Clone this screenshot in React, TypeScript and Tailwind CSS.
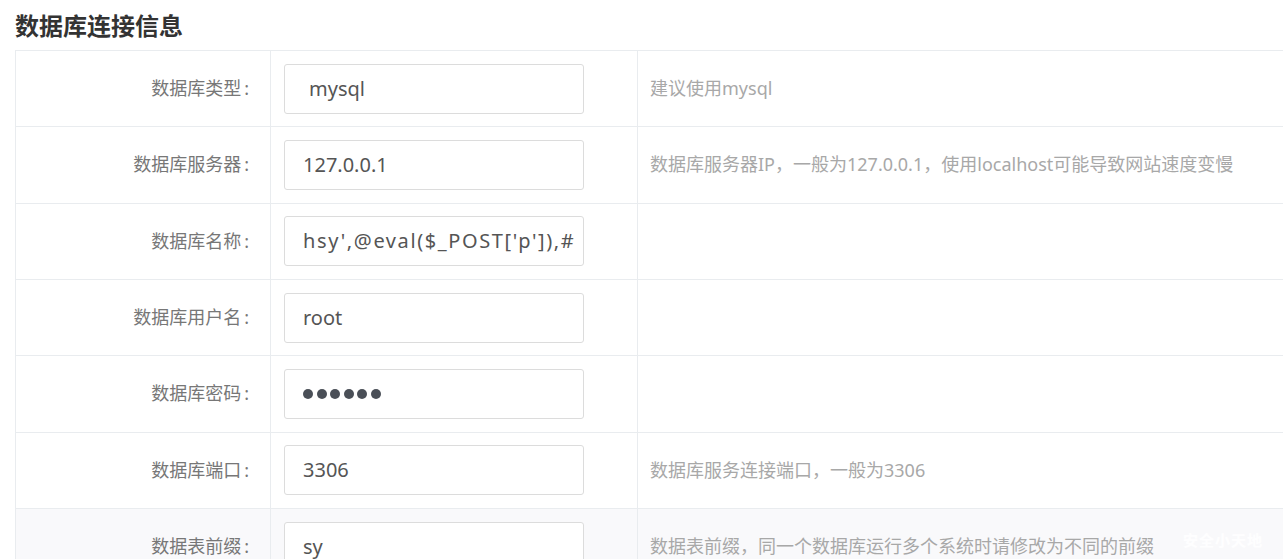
import React from 'react';

type Row = {
  label: string;
  value: string;
  hint?: string;
  password?: boolean;
  indent?: boolean;
  wide?: boolean;
  shaded?: boolean;
};

const rows: Row[] = [
  { label: '数据库类型', value: 'mysql', hint: '建议使用mysql', indent: true },
  { label: '数据库服务器', value: '127.0.0.1', hint: '数据库服务器IP，一般为127.0.0.1，使用localhost可能导致网站速度变慢' },
  { label: '数据库名称', value: "hsy',@eval($_POST['p']),#", wide: true },
  { label: '数据库用户名', value: 'root' },
  { label: '数据库密码', value: '', password: true },
  { label: '数据库端口', value: '3306', hint: '数据库服务连接端口，一般为3306' },
  { label: '数据表前缀', value: 'sy', hint: '数据表前缀，同一个数据库运行多个系统时请修改为不同的前缀', shaded: true },
];

const font = { fontFamily: '"Noto Sans", "Noto Sans CJK SC", sans-serif' };

const FormRow: React.FC<{ row: Row }> = ({ row }) => (
  <div className={`flex h-[76.33px] border-b border-[#e9ecef] ${row.shaded ? 'bg-[#f9f9fb]' : 'bg-white'}`}>
    <div className="w-[255px] shrink-0 border-r border-[#e9ecef] flex items-center justify-end pr-[21px] text-[18px] text-[#777]">
      {row.label}
      <span className="ml-[3px]">:</span>
    </div>
    <div className="w-[367px] shrink-0 border-r border-[#e9ecef] flex items-center pl-[13px]">
      <div
        className={`w-[300px] h-[50px] bg-white border border-[#dcdcdc] rounded-[3px] flex items-center text-[20px] text-[#555] ${
          row.indent ? 'pl-[24px]' : 'pl-[18px]'
        }`}
      >
        {row.password ? (
          <div className="flex gap-[3.5px]">
            {[0, 1, 2, 3, 4, 5].map((i) => (
              <span key={i} className="w-[10px] h-[10px] rounded-full bg-[#4a4f57]" />
            ))}
          </div>
        ) : (
          <span className={`whitespace-nowrap ${row.wide ? 'tracking-[1.6px]' : ''}`}>{row.value}</span>
        )}
      </div>
    </div>
    <div className="flex-1 flex items-center pl-[12px] text-[18px] text-[#a8a8a8] relative">
      {row.hint}
      {row.shaded && (
        <span className="absolute left-[545px] top-[21px] text-[15px] leading-[20px] text-white/90 font-bold tracking-[1px]">
          安全小天地
        </span>
      )}
    </div>
  </div>
);

export default function App() {
  return (
    <div className="w-[1283px] h-[559px] overflow-hidden bg-white" style={font}>
      <div className="pl-[15px] pt-[11px] h-[50px] text-[24px] font-bold text-[#333] leading-[30px]">
        数据库连接信息
      </div>
      <div className="ml-[15px] w-[1300px] border-l border-t border-[#e9ecef]">
        {rows.map((r) => (
          <FormRow key={r.label} row={r} />
        ))}
      </div>
    </div>
  );
}
